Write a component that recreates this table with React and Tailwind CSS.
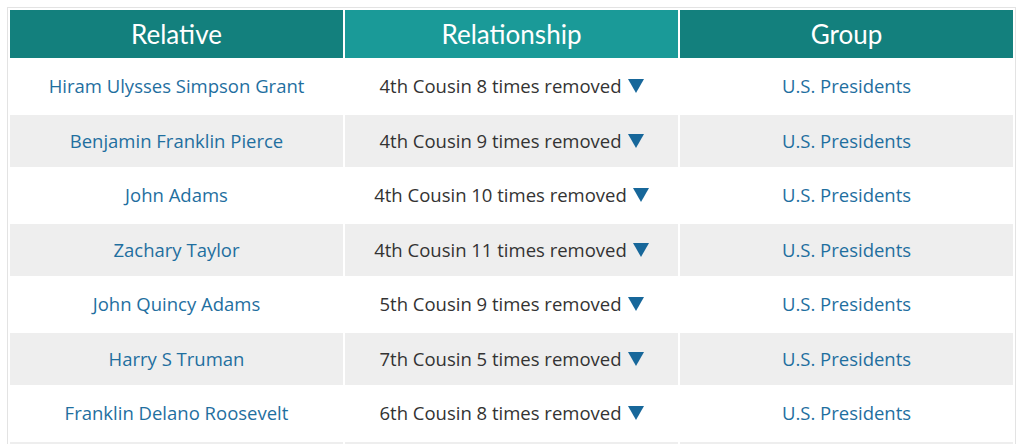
const rows = [
  { name: "Hiram Ulysses Simpson Grant", rel: "4th Cousin 8 times removed" },
  { name: "Benjamin Franklin Pierce", rel: "4th Cousin 9 times removed" },
  { name: "John Adams", rel: "4th Cousin 10 times removed" },
  { name: "Zachary Taylor", rel: "4th Cousin 11 times removed" },
  { name: "John Quincy Adams", rel: "5th Cousin 9 times removed" },
  { name: "Harry S Truman", rel: "7th Cousin 5 times removed" },
  { name: "Franklin Delano Roosevelt", rel: "6th Cousin 8 times removed" },
];

function Arrow() {
  return (
    <svg width="16" height="14" viewBox="0 0 16 14" className="inline-block ml-[6px] -mt-[4px] align-middle">
      <path d="M0 0 H16 L8 14 Z" fill="#17679a" />
    </svg>
  );
}

export default function App() {
  return (
    <div className="bg-white h-[444px] overflow-hidden pt-[7px] pl-[7px] pr-[8px]">
      <div className="border border-[#e3e3e3]">
        <table className="w-full border-separate border-spacing-[2px] table-fixed font-['Open_Sans',sans-serif] text-[18.5px]">
          <thead>
            <tr className="font-['Lato',sans-serif] text-white text-[26px] h-[48px]">
              <th className="font-normal bg-[#13807d] pt-[1px]">Relative</th>
              <th className="font-normal bg-[#1a9a98] pt-[1px]">Relationship</th>
              <th className="font-normal bg-[#13807d] pt-[1px]">Group</th>
            </tr>
          </thead>
          <tbody>
            {rows.map((r, i) => (
              <tr key={r.name} className={`h-[52.5px] text-center ${i % 2 ? "bg-[#eeeeee]" : "bg-white"}`}>
                <td className="text-[#1f6f9f]">{r.name}</td>
                <td className="text-[#333333]">
                  {r.rel}
                  <Arrow />
                </td>
                <td className="text-[#1f6f9f]">U.S. Presidents</td>
              </tr>
            ))}
            <tr className="h-[52.5px] bg-[#eeeeee]">
              <td></td>
              <td></td>
              <td></td>
            </tr>
          </tbody>
        </table>
      </div>
    </div>
  );
}
